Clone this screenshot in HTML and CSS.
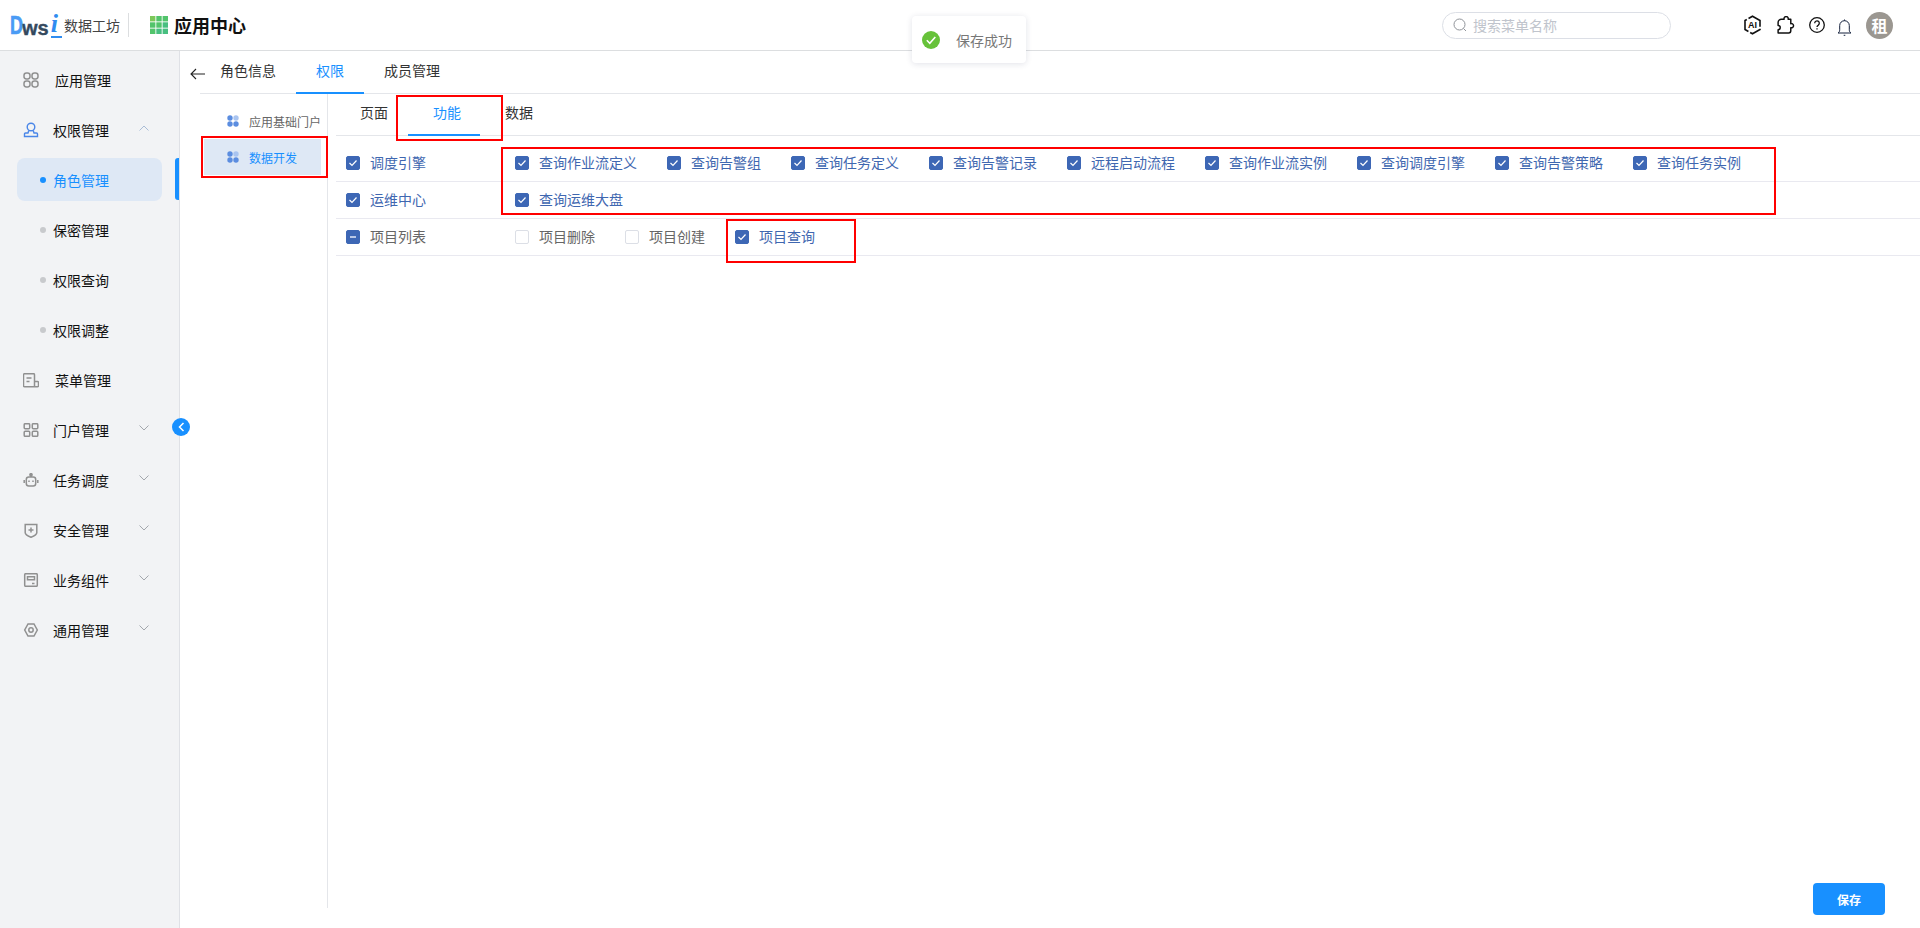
FILE: index.html
```html
<!DOCTYPE html>
<html lang="zh-CN">
<head>
<meta charset="utf-8">
<title>应用中心</title>
<link rel="stylesheet" href="styles.css">
</head>
<body>
<div class="app">
  <header class="topbar">
    <div class="logo"><span class="logo-d">D</span><span class="logo-ws">ws</span><span class="logo-i">i</span></div>
    <span class="logo-name">数据工坊</span>
    <span class="divider"></span>
    <svg class="grid-icon" width="18" height="18" viewBox="0 0 18 18"><rect x="0" y="0" width="5.4" height="5.4" fill="#7cc85a"/><rect x="6.3" y="0" width="5.4" height="5.4" fill="#52c46b"/><rect x="12.6" y="0" width="5.4" height="5.4" fill="#52c46b"/><rect x="0" y="6.3" width="5.4" height="5.4" fill="#52c46b"/><rect x="6.3" y="6.3" width="5.4" height="5.4" fill="#52c46b"/><rect x="12.6" y="6.3" width="5.4" height="5.4" fill="#48bf80"/><rect x="0" y="12.6" width="5.4" height="5.4" fill="#52c46b"/><rect x="6.3" y="12.6" width="5.4" height="5.4" fill="#48bf80"/><rect x="12.6" y="12.6" width="5.4" height="5.4" fill="#48bf80"/></svg>
    <span class="app-title">应用中心</span>
    <div class="search">
      <svg width="14" height="14" viewBox="0 0 14 14" fill="none" stroke="#8f9399" stroke-width="1"><circle cx="6.5" cy="6.5" r="5.5"/><path d="M10.5 10.5l2.5 2.5"/></svg>
      <span>搜索菜单名称</span>
    </div>
    <svg class="tool tool-ai" width="19" height="20" viewBox="0 0 19 20" fill="none" stroke="#111" stroke-width="1.6"><path d="M9.5 1.2l7.5 4.3v9l-7.5 4.3L2 14.500v-9z" stroke-dasharray="15 2 12 2"/><text x="9.500" y="13.200" text-anchor="middle" class="ai-text">AI</text></svg>
    <svg class="tool tool-puzzle" width="19" height="19" viewBox="0 0 18 18" fill="none" stroke="#111" stroke-width="1.4" stroke-linejoin="round"><path d="M6 3.600h2.200a2 2 0 1 1 3.800 0H14.500v4.200a2 2 0 1 1 0 3.800V14.500a2 2 0 0 1-2 2H2.500v-3a2 2 0 1 0 0-4V6.500A3 3 0 0 1 6 3.600z" transform="translate(-.5 -.5)"/></svg>
    <svg class="tool tool-help" width="16" height="16" viewBox="0 0 16 16" fill="none" stroke="#111" stroke-width="1.300"><circle cx="8" cy="8" r="7.300"/><path d="M5.700 6.200a2.300 2.300 0 1 1 3.600 1.900c-.8.500-1.300 1-1.300 2"/><path d="M8 11.300v1.200"/></svg>
    <svg class="tool tool-bell" width="15" height="18" viewBox="0 0 15 18" fill="none" stroke="#14213d" stroke-width="1"><path d="M1 15c1.200-.8 1.700-1.700 1.700-3.200V7.500a4.800 4.800 0 0 1 9.600 0v4.300c0 1.500.5 2.400 1.700 3.200z"/><path d="M7.500 2.700V1.500M6.700 17.300h1.600"/></svg>
    <span class="avatar">租</span>
  </header>

  <div class="layout">
    <aside class="sidebar">
      <div class="menu-row menu-row-wide">
        <svg class="menu-icon" width="16" height="16" viewBox="0 0 16 16" fill="none" stroke="#909090" stroke-width="1.500"><rect x="1" y="1" width="6" height="6" rx="2.400"/><rect x="9" y="1" width="6" height="6" rx="2.400"/><rect x="1" y="9" width="6" height="6" rx="2.400"/><rect x="9" y="9" width="6" height="6" rx="2.400"/></svg>
        <span>应用管理</span>
      </div>
      <div class="menu-row">
        <svg class="menu-icon" width="16" height="16" viewBox="0 0 16 16" fill="none" stroke="#4a86e8" stroke-width="1.400"><circle cx="8" cy="5" r="3.800"/><path d="M5.800 8.500L5 11H2.500a1 1 0 0 0-1 1v2.500h13V12a1 1 0 0 0-1-1H11l-.8-2.500"/></svg>
        <span>权限管理</span>
        <svg class="chevron" width="10" height="6" viewBox="0 0 10 6" fill="none" stroke="#a9bcd6" stroke-width="1"><path d="M.5 5.500L5 1l4.500 4.500"/></svg>
      </div>
      <div class="sub-row sub-active"><i class="dot dot-active"></i><span>角色管理</span></div>
      <div class="sub-row"><i class="dot"></i><span>保密管理</span></div>
      <div class="sub-row"><i class="dot"></i><span>权限查询</span></div>
      <div class="sub-row"><i class="dot"></i><span>权限调整</span></div>
      <div class="menu-row menu-row-wide">
        <svg class="menu-icon" width="16" height="15" viewBox="0 0 16 15" fill="none" stroke="#909090" stroke-width="1.500"><path d="M11.500 13.800H1.500a1 1 0 0 1-1-1V1.700a1 1 0 0 1 1-1h9a1 1 0 0 1 1 1v12M11.500 8.500h3a1 1 0 0 1 1 1v3.300a1 1 0 0 1-1 1h-3M3.500 5h5M3.500 8.500h3"/></svg>
        <span>菜单管理</span>
      </div>
      <div class="menu-row">
        <svg class="menu-icon" width="15" height="14" viewBox="0 0 15 14" fill="none" stroke="#909090" stroke-width="1.500"><rect x=".7" y=".7" width="5.500" height="5" rx="1"/><rect x="8.800" y=".7" width="5.500" height="5" rx="1"/><rect x=".7" y="8.300" width="5.500" height="5" rx="1"/><rect x="8.800" y="8.300" width="5.500" height="5" rx="1"/></svg>
        <span>门户管理</span>
        <svg class="chevron" width="10" height="6" viewBox="0 0 10 6" fill="none" stroke="#a3a7ad" stroke-width="1"><path d="M.5.500L5 5l4.500-4.500"/></svg>
      </div>
      <div class="menu-row">
        <svg class="menu-icon" width="15" height="14" viewBox="0 0 15 14" fill="none" stroke="#909090" stroke-width="1.500"><rect x="2.800" y="4" width="9.400" height="9" rx="2.500"/><circle cx="7.500" cy="1.800" r="1.100" fill="#909090"/><path d="M7.500 3v1M.7 7v3M14.300 7v3"/><path d="M5.500 7.500v1.500M9.500 7.500v1.500" stroke-width="1.500"/></svg>
        <span>任务调度</span>
        <svg class="chevron" width="10" height="6" viewBox="0 0 10 6" fill="none" stroke="#a3a7ad" stroke-width="1"><path d="M.5.500L5 5l4.500-4.500"/></svg>
      </div>
      <div class="menu-row">
        <svg class="menu-icon" width="13" height="15" viewBox="0 0 13 15" fill="none" stroke="#909090" stroke-width="1.500"><path d="M.7 1.500h11.600v8.200c0 1.500-3 3.400-5.800 4.600C3.700 13.100.7 11.200.7 9.700z"/><path d="M6.500 4.500v5M4 7h5"/></svg>
        <span>安全管理</span>
        <svg class="chevron" width="10" height="6" viewBox="0 0 10 6" fill="none" stroke="#a3a7ad" stroke-width="1"><path d="M.5.500L5 5l4.500-4.500"/></svg>
      </div>
      <div class="menu-row">
        <svg class="menu-icon" width="14" height="14" viewBox="0 0 14 14" fill="none" stroke="#909090" stroke-width="1.500"><rect x=".7" y=".7" width="12.600" height="12.600" rx="1"/><path d="M3.500 3.800h7v3h-7zM8 10.500h2.500"/></svg>
        <span>业务组件</span>
        <svg class="chevron" width="10" height="6" viewBox="0 0 10 6" fill="none" stroke="#a3a7ad" stroke-width="1"><path d="M.5.500L5 5l4.500-4.500"/></svg>
      </div>
      <div class="menu-row">
        <svg class="menu-icon" width="14" height="14" viewBox="0 0 14 14" fill="none" stroke="#909090" stroke-width="1.500"><path d="M4 1h6l3.300 6L10 13H4L.7 7z"/><circle cx="7" cy="7" r="2.200"/></svg>
        <span>通用管理</span>
        <svg class="chevron" width="10" height="6" viewBox="0 0 10 6" fill="none" stroke="#a3a7ad" stroke-width="1"><path d="M.5.500L5 5l4.500-4.500"/></svg>
      </div>
      <span class="collapse-btn"><svg width="7" height="10" viewBox="0 0 7 10" fill="none" stroke="#fff" stroke-width="1.500"><path d="M5.500 1L1.500 5l4 4"/></svg></span>
    </aside>

    <main class="main">
      <nav class="tabs">
        <svg class="back" width="15" height="12" viewBox="0 0 15 12" fill="none" stroke="#222" stroke-width="1.100"><path d="M15 6H1M6 1L1 6l5 5"/></svg>
        <span class="tab">角色信息</span>
        <span class="tab tab-active">权限</span>
        <span class="tab">成员管理</span>
      </nav>
      <div class="content">
        <div class="side-list">
          <div class="side-item">
            <svg width="12" height="12" viewBox="0 0 12 12"><circle cx="3" cy="3" r="2.700" fill="#5b8de0"/><circle cx="9" cy="3" r="2.700" fill="#a9c4f0"/><circle cx="3" cy="9" r="2.700" fill="#5b8de0"/><circle cx="9" cy="9" r="2.700" fill="#5b8de0"/></svg>
            <span>应用基础门户</span>
          </div>
          <div class="side-item side-active">
            <svg width="12" height="12" viewBox="0 0 12 12"><circle cx="3" cy="3" r="2.700" fill="#5b8de0"/><circle cx="9" cy="3" r="2.700" fill="#a9c4f0"/><circle cx="3" cy="9" r="2.700" fill="#5b8de0"/><circle cx="9" cy="9" r="2.700" fill="#5b8de0"/></svg>
            <span>数据开发</span>
          </div>
        </div>
        <div class="panel">
          <div class="subtabs">
            <span class="subtab">页面</span>
            <span class="subtab subtab-active">功能</span>
            <span class="subtab subtab-last">数据</span>
          </div>
          <div class="rows">
            <div class="row">
              <label class="group on"><i class="cb cb-on"><svg width="10" height="8" viewBox="0 0 10 8" fill="none" stroke="#fff" stroke-width="1.200"><path d="M1.500 4l2.500 2.500 4.500-5"/></svg></i>调度引擎</label>
              <div class="items">
                <label class="item on"><i class="cb cb-on"><svg width="10" height="8" viewBox="0 0 10 8" fill="none" stroke="#fff" stroke-width="1.200"><path d="M1.500 4l2.500 2.500 4.500-5"/></svg></i>查询作业流定义</label>
                <label class="item on"><i class="cb cb-on"><svg width="10" height="8" viewBox="0 0 10 8" fill="none" stroke="#fff" stroke-width="1.200"><path d="M1.500 4l2.500 2.500 4.500-5"/></svg></i>查询告警组</label>
                <label class="item on"><i class="cb cb-on"><svg width="10" height="8" viewBox="0 0 10 8" fill="none" stroke="#fff" stroke-width="1.200"><path d="M1.500 4l2.500 2.500 4.500-5"/></svg></i>查询任务定义</label>
                <label class="item on"><i class="cb cb-on"><svg width="10" height="8" viewBox="0 0 10 8" fill="none" stroke="#fff" stroke-width="1.200"><path d="M1.500 4l2.500 2.500 4.500-5"/></svg></i>查询告警记录</label>
                <label class="item on"><i class="cb cb-on"><svg width="10" height="8" viewBox="0 0 10 8" fill="none" stroke="#fff" stroke-width="1.200"><path d="M1.500 4l2.500 2.500 4.500-5"/></svg></i>远程启动流程</label>
                <label class="item on"><i class="cb cb-on"><svg width="10" height="8" viewBox="0 0 10 8" fill="none" stroke="#fff" stroke-width="1.200"><path d="M1.500 4l2.500 2.500 4.500-5"/></svg></i>查询作业流实例</label>
                <label class="item on"><i class="cb cb-on"><svg width="10" height="8" viewBox="0 0 10 8" fill="none" stroke="#fff" stroke-width="1.200"><path d="M1.500 4l2.500 2.500 4.500-5"/></svg></i>查询调度引擎</label>
                <label class="item on"><i class="cb cb-on"><svg width="10" height="8" viewBox="0 0 10 8" fill="none" stroke="#fff" stroke-width="1.200"><path d="M1.500 4l2.500 2.500 4.500-5"/></svg></i>查询告警策略</label>
                <label class="item on"><i class="cb cb-on"><svg width="10" height="8" viewBox="0 0 10 8" fill="none" stroke="#fff" stroke-width="1.200"><path d="M1.500 4l2.500 2.500 4.500-5"/></svg></i>查询任务实例</label>
              </div>
            </div>
            <div class="row">
              <label class="group on"><i class="cb cb-on"><svg width="10" height="8" viewBox="0 0 10 8" fill="none" stroke="#fff" stroke-width="1.200"><path d="M1.500 4l2.500 2.500 4.500-5"/></svg></i>运维中心</label>
              <div class="items">
                <label class="item on"><i class="cb cb-on"><svg width="10" height="8" viewBox="0 0 10 8" fill="none" stroke="#fff" stroke-width="1.200"><path d="M1.500 4l2.500 2.500 4.500-5"/></svg></i>查询运维大盘</label>
              </div>
            </div>
            <div class="row">
              <label class="group"><i class="cb cb-on"><b class="cb-bar"></b></i>项目列表</label>
              <div class="items">
                <label class="item"><i class="cb"></i>项目删除</label>
                <label class="item"><i class="cb"></i>项目创建</label>
                <label class="item on"><i class="cb cb-on"><svg width="10" height="8" viewBox="0 0 10 8" fill="none" stroke="#fff" stroke-width="1.200"><path d="M1.500 4l2.500 2.500 4.500-5"/></svg></i>项目查询</label>
              </div>
            </div>
          </div>
          <div class="actions"><button class="save" type="button">保存</button></div>
        </div>
      </div>
    </main>
  </div>

  <div class="toast">
    <svg width="18" height="18" viewBox="0 0 18 18"><circle cx="9" cy="9" r="9" fill="#67c23a"/><path d="M4.800 9.300l3 3 5.500-6.300" fill="none" stroke="#fff" stroke-width="1.600"/></svg>
    <span>保存成功</span>
  </div>

  <span class="mark mark-side"></span>
  <span class="mark mark-tab"></span>
  <span class="mark mark-items"></span>
  <span class="mark mark-query"></span>
</div>
</body>
</html>
```

FILE: styles.css
```css
* { box-sizing: border-box; }

html, body {
  margin: 0;
  padding: 0;
  height: 100%;
  overflow: hidden;
  background: #fff;
}

body {
  font-family: "Noto Sans CJK SC", "Liberation Sans", sans-serif;
  font-size: 14px;
  color: #222;
}

.app {
  position: relative;
  width: 1920px;
  height: 928px;
  display: flex;
  flex-direction: column;
}

/* top bar */
.topbar {
  height: 51px;
  flex: none;
  display: flex;
  align-items: center;
  padding-left: 10px;
  border-bottom: 1px solid #dcdee0;
}

.logo {
  width: 53px;
  height: 26px;
  flex: none;
  display: flex;
  align-items: flex-end;
  font-family: "Liberation Sans", sans-serif;
  font-weight: 700;
  line-height: 1;
}

.logo-d {
  display: inline-block;
  width: 12px;
  font-size: 25px;
  color: #4a9bf5;
  transform: scaleX(.72);
  transform-origin: left bottom;
  -webkit-text-stroke: .6px #4a9bf5;
}

.logo-ws {
  font-size: 20px;
  color: #34495e;
  -webkit-text-stroke: .4px #34495e;
}

.logo-i {
  width: 11px;
  margin-left: 2px;
  font-family: "Liberation Serif", serif;
  font-style: italic;
  font-size: 26px;
  line-height: 24px;
  color: #2f8cf0;
  border-bottom: 2px solid #2f8cf0;
}

.logo-name {
  margin-left: 1px;
  font-size: 14px;
  color: #444;
}

.divider {
  width: 1px;
  height: 24px;
  margin: 0 21px 0 8px;
  background: #dcdee0;
}

.grid-icon { flex: none; }

.app-title {
  margin-left: 6px;
  font-size: 18px;
  font-weight: 700;
  color: #111;
}

.search {
  width: 229px;
  height: 27px;
  margin-left: 1196px;
  display: flex;
  align-items: center;
  gap: 6px;
  padding-left: 10px;
  border: 1px solid #dcdfe6;
  border-radius: 14px;
  color: #c0c4cc;
}

.tool { flex: none; }
.tool-ai { margin-left: 72px; }
.tool-puzzle { margin-left: 14px; }
.tool-help { margin-left: 14px; }
.tool-bell { margin-left: 12px; margin-top: 4px; }

.ai-text {
  font-family: "Liberation Sans", sans-serif;
  font-size: 9px;
  font-weight: 700;
  fill: #111;
  stroke: none;
}

.avatar {
  width: 27px;
  height: 27px;
  margin-left: 14px;
  flex: none;
  display: flex;
  align-items: center;
  justify-content: center;
  border-radius: 50%;
  background: #9b9791;
  color: #fff;
  font-size: 16px;
  font-weight: 700;
}

/* page layout */
.layout {
  flex: 1;
  display: flex;
  min-height: 0;
}

/* side menu */
.sidebar {
  position: relative;
  width: 180px;
  flex: none;
  padding-top: 4px;
  background: #f2f3f5;
  border-right: 1px solid #dfe1e6;
}

.menu-row {
  position: relative;
  height: 50px;
  display: flex;
  align-items: center;
  padding-left: 23px;
  color: #111;
}

.menu-icon {
  width: 16px;
  flex: none;
  margin-right: 14px;
}

.menu-row-wide .menu-icon { margin-right: 16px; }

.chevron {
  position: absolute;
  left: 139px;
  top: 20px;
}

.sub-row {
  position: relative;
  height: 50px;
  display: flex;
  align-items: center;
  padding-left: 40px;
  color: #111;
}

.sub-active {
  height: 43px;
  margin: 3px 17px 4px;
  padding: 1px 0 0 23px;
  border-radius: 8px;
  background: #dee8f5;
  color: #1890ff;
}

.sub-active::after {
  content: "";
  position: absolute;
  left: 158px;
  top: 0;
  width: 4px;
  height: 42px;
  border-radius: 3px 0 0 3px;
  background: #1890ff;
}

.dot {
  width: 6px;
  height: 6px;
  margin-right: 7px;
  flex: none;
  border-radius: 50%;
  background: #c8cacd;
}

.dot-active { background: #1890ff; }

.collapse-btn {
  position: absolute;
  left: 172px;
  top: 367px;
  width: 18px;
  height: 18px;
  display: flex;
  align-items: center;
  justify-content: center;
  border-radius: 50%;
  background: #1890ff;
  z-index: 2;
}

/* main */
.main {
  flex: 1;
  min-width: 0;
  display: flex;
  flex-direction: column;
}

.tabs {
  height: 43px;
  flex: none;
  display: flex;
  margin-left: 20px;
  border-bottom: 1px solid #e4e6ea;
}

.back {
  flex: none;
  margin: 17px -5px 0 -10px;
}

.tab {
  position: relative;
  padding: 0 20px;
  line-height: 38px;
  color: #333;
}

.tab-active { color: #1890ff; }

.tab-active::after {
  content: "";
  position: absolute;
  left: 0;
  right: 0;
  bottom: -1px;
  height: 2px;
  background: #1890ff;
}

.content {
  flex: 1;
  min-height: 0;
  display: flex;
  align-items: flex-start;
  margin-left: 20px;
}

.side-list {
  width: 128px;
  height: 814px;
  flex: none;
  padding: 9px 6px 0 4px;
  border-right: 1px solid #e4e6ea;
}

.side-item {
  height: 36px;
  display: flex;
  align-items: center;
  gap: 10px;
  padding-left: 23px;
  font-size: 12px;
  color: #666;
}

.side-active {
  background: #dee8f5;
  color: #1890ff;
}

.panel {
  flex: 1;
  min-width: 0;
  height: 100%;
  margin-left: 8px;
  display: flex;
  flex-direction: column;
}

.subtabs {
  height: 42px;
  flex: none;
  display: flex;
  gap: 1px;
  padding-left: 2px;
  border-bottom: 1px solid #e4e6ea;
}

.subtab {
  position: relative;
  width: 72px;
  text-align: center;
  line-height: 36px;
  color: #333;
}

.subtab-last { margin-left: -1px; }

.subtab-active { color: #1890ff; }

.subtab-active::after {
  content: "";
  position: absolute;
  left: -3px;
  bottom: -1px;
  width: 72px;
  height: 2px;
  background: #1890ff;
}

.rows { margin-top: 9px; }

.row {
  height: 37px;
  display: flex;
  align-items: center;
  padding: 0 0 2px 10px;
  border-bottom: 1px solid #e9e9f0;
  color: #666;
}

.group {
  width: 169px;
  flex: none;
  display: flex;
  align-items: center;
  gap: 10px;
}

.items {
  display: flex;
  gap: 30px;
}

.item {
  display: flex;
  align-items: center;
  gap: 10px;
  white-space: nowrap;
}

.on { color: #3f67b0; }

.cb {
  width: 14px;
  height: 14px;
  margin-top: 2px;
  flex: none;
  display: flex;
  align-items: center;
  justify-content: center;
  border: 1px solid #dcdfe6;
  border-radius: 2px;
  background: #fff;
}

.cb-on {
  border-color: #3d67b5;
  background: #3d67b5;
}

.cb-bar {
  width: 6px;
  height: 2px;
  background: #b9c8e6;
}

.actions {
  margin-top: auto;
  padding: 0 35px 13px 0;
  display: flex;
  justify-content: flex-end;
}

.save {
  width: 72px;
  height: 32px;
  padding: 0;
  border: 0;
  border-radius: 4px;
  background: #1890ff;
  color: #fff;
  font: 700 12px "Noto Sans CJK SC", "Liberation Sans", sans-serif;
}

/* toast */
.toast {
  position: absolute;
  left: 912px;
  top: 16px;
  width: 114px;
  height: 47px;
  display: flex;
  align-items: center;
  gap: 16px;
  padding-left: 10px;
  background: #fff;
  border-radius: 4px;
  box-shadow: 0 1px 6px rgba(40, 50, 90, .14);
  color: #777;
  z-index: 5;
}

/* red annotation frames drawn over the screenshot */
.mark {
  position: absolute;
  border: 2px solid #f00;
  z-index: 4;
}

.mark-side { left: 201px; top: 136px; width: 127px; height: 42px; }
.mark-tab { left: 396px; top: 95px; width: 107px; height: 46px; }
.mark-items { left: 501px; top: 147px; width: 1275px; height: 68px; }
.mark-query { left: 726px; top: 219px; width: 130px; height: 44px; }
```
